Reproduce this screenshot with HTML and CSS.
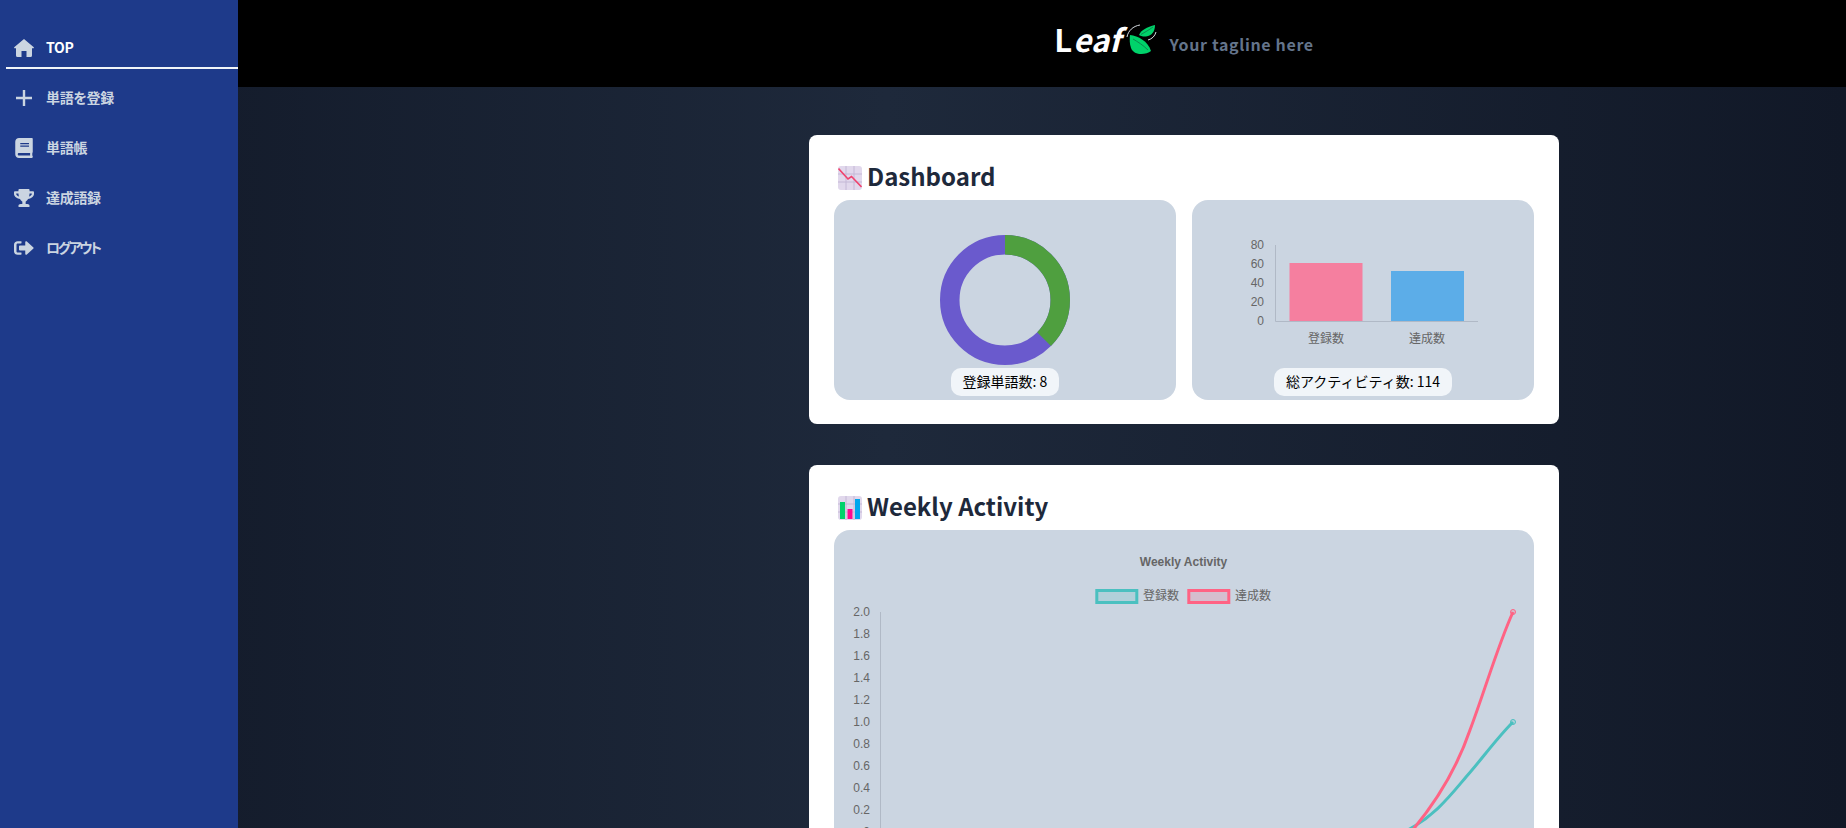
FILE: index.html
```html
<!DOCTYPE html>
<html lang="ja">
<head>
    <meta charset="utf-8">
    <title>Leaf</title>
    <link rel="stylesheet" href="styles.css">
</head>
<body>
    <div class="app">
        <nav class="sidebar">
            <a class="nav-item active" href="#">
                <span class="nav-icon"><svg width="20" height="18" viewBox="0 0 20 18"><path d="M10 0L19.8 8.3Q20.3 9.6 18 9.3V16.5Q18 18 16.5 18H12.5V12H7.5V18H3.5Q2 18 2 16.5V9.3Q-.3 9.6 .2 8.3Z"/></svg></span>
                <span class="nav-label">TOP</span>
            </a>
            <a class="nav-item" href="#">
                <span class="nav-icon"><svg width="18" height="18" viewBox="0 0 18 18"><path class="plus" d="M9 1v16M1 9h16"/></svg></span>
                <span class="nav-label">単語を登録</span>
            </a>
            <a class="nav-item" href="#">
                <span class="nav-icon"><svg width="18" height="20" viewBox="0 0 448 512"><path d="M448 360V24c0-13.3-10.7-24-24-24H96C43 0 0 43 0 96v320c0 53 43 96 96 96h328c13.3 0 24-10.7 24-24v-16c0-7.5-3.5-14.3-8.9-18.7-4.2-15.4-4.2-59.3 0-74.7 5.4-4.3 8.9-11.1 8.9-18.6zM128 134c0-3.3 2.7-6 6-6h212c3.3 0 6 2.7 6 6v20c0 3.3-2.7 6-6 6H134c-3.3 0-6-2.7-6-6v-20zm0 64c0-3.3 2.7-6 6-6h212c3.3 0 6 2.7 6 6v20c0 3.3-2.7 6-6 6H134c-3.3 0-6-2.7-6-6v-20zm253.4 250H96c-17.7 0-32-14.3-32-32 0-17.6 14.4-32 32-32h285.4c-1.9 17.1-1.9 46.9 0 64z"/></svg></span>
                <span class="nav-label">単語帳</span>
            </a>
            <a class="nav-item" href="#">
                <span class="nav-icon"><svg width="20" height="18" viewBox="0 0 576 512"><path d="M552 64H448V24c0-13.3-10.7-24-24-24H152c-13.3 0-24 10.7-24 24v40H24C10.7 64 0 74.7 0 88v56c0 35.7 22.5 72.4 61.9 100.7 31.5 22.7 69.8 37.1 110 41.7C203.3 338.5 240 360 240 360v72h-48c-35.3 0-64 20.7-64 56v12c0 6.6 5.4 12 12 12h296c6.6 0 12-5.4 12-12v-12c0-35.3-28.7-56-64-56h-48v-72s36.7-21.5 68.1-73.6c40.3-4.6 78.6-19 110-41.7 39.3-28.3 61.9-65 61.9-100.7V88c0-13.3-10.7-24-24-24zM99.3 192.8C74.9 175.2 64 155.6 64 144v-16h64.2c1 32.6 5.8 61.2 12.8 86.2-15.1-5.2-29.2-12.4-41.7-21.4zM512 144c0 16.1-17.7 36.1-35.3 48.8-12.5 9-26.7 16.2-41.8 21.4 7-25 11.8-53.6 12.8-86.2H512v16z"/></svg></span>
                <span class="nav-label">達成語録</span>
            </a>
            <a class="nav-item" href="#">
                <span class="nav-icon"><svg width="20" height="18" viewBox="0 0 512 512" preserveAspectRatio="none"><path d="M497 273L329 441c-15 15-41 4.5-41-17v-96H152c-13.3 0-24-10.7-24-24v-96c0-13.3 10.7-24 24-24h136V88c0-21.4 25.9-32 41-17l168 168c9.3 9.4 9.3 24.6 0 34zM192 436v-40c0-6.6-5.4-12-12-12H96c-17.7 0-32-14.3-32-32V160c0-17.7 14.3-32 32-32h84c6.6 0 12-5.4 12-12V76c0-6.6-5.4-12-12-12H96c-53 0-96 43-96 96v192c0 53 43 96 96 96h84c6.6 0 12-5.4 12-12z"/></svg></span>
                <span class="nav-label nav-label-tight">ログアウト</span>
            </a>
        </nav>

        <div class="main">
            <header class="topbar">
                <div class="logo">L<em>eaf</em></div>
                <svg class="logo-mark" width="32" height="32" viewBox="0 0 32 32">
                    <path class="leaf" d="M4 11C12 12 22 17 25 27C20 31 8 32 5 24C3.5 20 3.5 15 4 11Z"/>
                    <path class="leaf" d="M29 1C29 7 26 12 20 12.5C17 12.7 14 12 13 11C15 6 21 3 29 1Z"/>
                    <path class="vein" d="M7 15C12 18 17 21 22 26M27 3C23 6 19 8 15 10.5"/>
                    <path class="swish" d="M1 13C2 7 7 2 14 1M22 16C26 15 29 12 30 8"/>
                </svg>
                <span class="tagline">Your tagline here</span>
            </header>

            <div class="content">
                <section class="card">
                    <h2 class="card-title">
                        <svg class="emoji" width="24" height="24" viewBox="0 0 24 24">
                            <rect class="emoji-bg" width="24" height="24" rx="3"/>
                            <path class="emoji-grid" d="M8 0v24M16 0v24M0 8h24M0 16h24"/>
                            <path class="emoji-trend" d="M0.5 2.5L10 13L13.5 10.5L23.5 21"/>
                        </svg>
                        Dashboard
                    </h2>
                    <div class="panel-row">
                        <div class="panel">
                            <svg class="chart" width="342" height="168" viewBox="0 0 342 168">
                                <circle class="donut-purple" cx="171" cy="100" r="55.25"/>
                                <circle class="donut-green" cx="171" cy="100" r="55.25" pathLength="360" stroke-dasharray="135 225" transform="rotate(-90 171 100)"/>
                            </svg>
                            <div class="stat-pill">登録単語数: 8</div>
                        </div>
                        <div class="panel">
                            <svg class="chart" width="342" height="168" viewBox="0 0 342 168">
                                <path class="axis" d="M83.5 45V121.5H286"/>
                                <rect class="bar-pink" x="97.5" y="63" width="73" height="58"/>
                                <rect class="bar-blue" x="199" y="71" width="73" height="50"/>
                                <g class="tick tick-end">
                                    <text x="72" y="49">80</text>
                                    <text x="72" y="68">60</text>
                                    <text x="72" y="87">40</text>
                                    <text x="72" y="106">20</text>
                                    <text x="72" y="125">0</text>
                                </g>
                                <g class="tick-jp tick-mid">
                                    <text x="134" y="143">登録数</text>
                                    <text x="235" y="143">達成数</text>
                                </g>
                            </svg>
                            <div class="stat-pill">総アクティビティ数: 114</div>
                        </div>
                    </div>
                </section>

                <section class="card">
                    <h2 class="card-title">
                        <svg class="emoji" width="24" height="24" viewBox="0 0 24 24">
                            <rect class="emoji-bg" width="24" height="24" rx="3"/>
                            <path class="emoji-grid" d="M8 0v24M16 0v24M0 8h24M0 16h24"/>
                            <rect class="emoji-green" x="2" y="6" width="5" height="17"/>
                            <rect class="emoji-pink" x="9.5" y="13" width="5" height="10"/>
                            <rect class="emoji-blue" x="17" y="3" width="5" height="20"/>
                        </svg>
                        Weekly Activity
                    </h2>
                    <div class="panel panel-wide">
                        <svg class="chart" width="700" height="400" viewBox="0 0 700 400">
                            <text class="chart-title" x="349.5" y="36">Weekly Activity</text>
                            <rect class="legend-teal" x="262.8" y="60.5" width="40" height="12"/>
                            <text class="tick-jp" x="309" y="70">登録数</text>
                            <rect class="legend-pink" x="354.8" y="60.5" width="40" height="12"/>
                            <text class="tick-jp" x="401" y="70">達成数</text>
                            <path class="axis" d="M46.5 82V302"/>
                            <g class="tick tick-end">
                                <text x="36" y="85.5">2.0</text>
                                <text x="36" y="107.5">1.8</text>
                                <text x="36" y="129.5">1.6</text>
                                <text x="36" y="151.5">1.4</text>
                                <text x="36" y="173.5">1.2</text>
                                <text x="36" y="195.5">1.0</text>
                                <text x="36" y="217.5">0.8</text>
                                <text x="36" y="239.5">0.6</text>
                                <text x="36" y="261.5">0.4</text>
                                <text x="36" y="283.5">0.2</text>
                                <text x="36" y="305.5">0</text>
                            </g>
                            <path class="line-teal" d="M679 192C662 209 648 229 632 247C616 266 600 287 570 302"/>
                            <path class="line-pink" d="M679 82C664 115 651 160 636 200C624 235 604 272 570 310"/>
                            <circle class="point-teal" cx="679" cy="192" r="2.5"/>
                            <circle class="point-pink" cx="679" cy="82" r="2.5"/>
                        </svg>
                    </div>
                </section>
            </div>
        </div>
    </div>
</body>
</html>
```

FILE: styles.css
```css
* {
    box-sizing: border-box;
}

html,
body {
    height: 100%;
    margin: 0;
}

body {
    font-family: "Noto Sans CJK JP", "Noto Sans", sans-serif;
    background: linear-gradient(to right, #111827, #1e293b 48%, #111827);
    overflow: hidden;
}

.app {
    display: flex;
    height: 100%;
}

/* sidebar */
.sidebar {
    flex: 0 0 238px;
    display: flex;
    flex-direction: column;
    gap: 9px;
    padding: 28px 0 0 6px;
    background-color: #1e3a8a;
}

.nav-item {
    display: flex;
    align-items: center;
    height: 41px;
    padding-left: 8px;
    border-bottom: 2px solid transparent;
    color: #cbd5e1;
    font-size: 14px;
    font-weight: 700;
    font-feature-settings: "palt";
    text-decoration: none;
}

.nav-item.active {
    border-bottom-color: #f1f5f9;
    color: #fff;
}

.nav-icon {
    flex: 0 0 20px;
    display: flex;
    justify-content: center;
    margin-right: 12px;
}

.nav-icon svg {
    display: block;
    fill: #cbd5e1;
}

.nav-label {
    margin-bottom: 2px;
    letter-spacing: -0.3px;
}

.nav-label-tight {
    letter-spacing: -2.4px;
}

.plus {
    fill: none;
    stroke: #cbd5e1;
    stroke-width: 2.4;
}

/* header */
.main {
    flex: 1;
    min-width: 0;
    overflow: hidden;
}

.topbar {
    display: flex;
    align-items: center;
    justify-content: center;
    height: 87px;
    padding-left: 284px;
    background-color: #000;
}

.logo {
    margin-bottom: 11px;
    color: #fff;
    font-size: 31px;
    font-weight: 700;
    line-height: 1;
}

.logo em {
    margin-left: 1px;
    font-style: italic;
}

.logo-mark {
    margin: 0 12px 7px 5px;
}

.leaf {
    fill: #00d26a;
}

.vein {
    fill: none;
    stroke: #0a8a50;
    stroke-width: 1;
}

.swish {
    fill: none;
    stroke: #d8dde3;
    stroke-width: 1;
}

.tagline {
    color: #64748b;
    font-size: 16px;
    font-weight: 700;
    letter-spacing: 0.65px;
}

/* cards */
.content {
    display: flex;
    flex-direction: column;
    gap: 41px;
    width: 750px;
    margin-left: 571px;
    padding-top: 48px;
}

.card {
    padding: 24px 25px;
    background-color: #fff;
    border-radius: 8px;
}

.card-title {
    display: flex;
    align-items: center;
    gap: 5px;
    height: 41px;
    margin: 0;
    padding: 0 0 9px 4px;
    color: #1e293b;
    font-size: 24px;
    font-weight: 700;
}

.emoji {
    flex: none;
    margin-top: 6px;
}

.emoji-bg {
    fill: #e1d8ec;
}

.emoji-grid {
    fill: none;
    stroke: #c4b8d6;
    stroke-width: 1;
}

.emoji-trend {
    fill: none;
    stroke: #f0436e;
    stroke-width: 1.6;
}

.emoji-green {
    fill: #00d26a;
}

.emoji-pink {
    fill: #ff0a8f;
}

.emoji-blue {
    fill: #00a6ed;
}

.panel-row {
    display: flex;
    gap: 16px;
}

.panel {
    flex: 1;
    display: flex;
    flex-direction: column;
    align-items: center;
    height: 200px;
    background-color: #cbd5e1;
    border-radius: 16px;
}

.panel-wide {
    height: 420px;
}

.chart {
    display: block;
    flex: none;
}

.stat-pill {
    height: 28px;
    padding: 0 12px;
    background-color: #f1f5f9;
    border-radius: 10px;
    color: #000;
    font-size: 14px;
    line-height: 27px;
}

/* charts */
.donut-purple,
.donut-green {
    fill: none;
    stroke-width: 19.5;
}

.donut-purple {
    stroke: #6a5acd;
}

.donut-green {
    stroke: #4f9f3f;
}

.axis {
    fill: none;
    stroke: #b0b9c6;
    stroke-width: 1;
}

.bar-pink {
    fill: #f57f9f;
}

.bar-blue {
    fill: #5cade8;
}

.tick {
    fill: #666;
    font-family: "Liberation Sans", sans-serif;
    font-size: 12px;
}

.tick-jp {
    fill: #666;
    font-family: "Noto Sans CJK JP", sans-serif;
    font-size: 12px;
}

.tick-end {
    text-anchor: end;
}

.tick-mid {
    text-anchor: middle;
}

.chart-title {
    fill: #666;
    font-family: "Liberation Sans", sans-serif;
    font-size: 12px;
    font-weight: 700;
    text-anchor: middle;
}

.legend-teal {
    fill: rgba(75, 192, 192, 0.2);
    stroke: #4bc0c0;
    stroke-width: 3;
}

.legend-pink {
    fill: rgba(255, 99, 132, 0.2);
    stroke: #ff6384;
    stroke-width: 3;
}

.line-teal,
.line-pink {
    fill: none;
    stroke-width: 3;
}

.line-teal {
    stroke: #4bc0c0;
}

.line-pink {
    stroke: #ff6384;
}

.point-teal {
    fill: rgba(75, 192, 192, 0.2);
    stroke: #4bc0c0;
}

.point-pink {
    fill: rgba(255, 99, 132, 0.2);
    stroke: #ff6384;
}
```
